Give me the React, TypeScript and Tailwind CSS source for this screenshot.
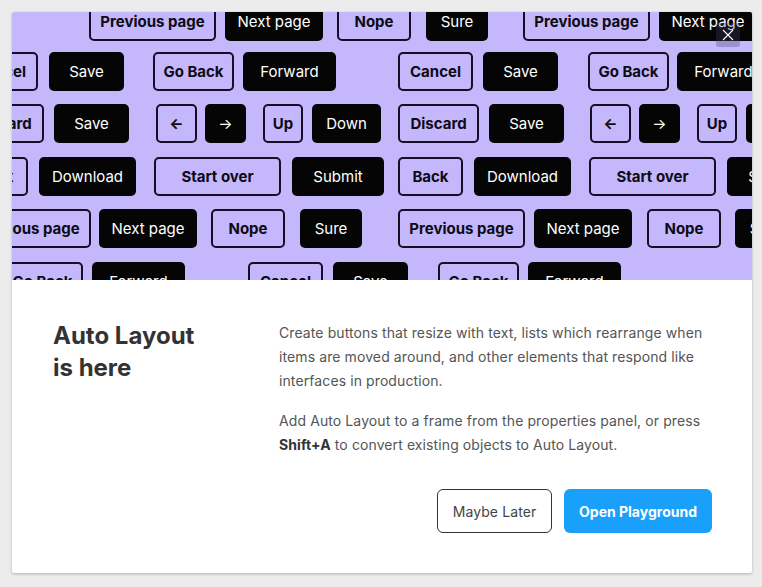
import React from "react";

type Btn = { t: string; d: boolean; w: string; ml: string };

const W: Record<string, string> = {
  "Previous page": "w-[127px]",
  "Next page": "w-[98px]",
  Nope: "w-[74px]",
  Sure: "w-[62px]",
  Cancel: "w-[75px]",
  Save: "w-[75px]",
  "Go Back": "w-[81px]",
  Forward: "w-[93px]",
  Discard: "w-[81px]",
  "←": "w-[41px]",
  "→": "w-[41px]",
  Up: "w-[40px]",
  Down: "w-[69px]",
  Back: "w-[65px]",
  Download: "w-[97px]",
  "Start over": "w-[127px]",
  Submit: "w-[92px]",
};

const b = (t: string, d: boolean, ml: string): Btn => ({ t, d, w: W[t], ml });

const rows: { mt: string; items: Btn[] }[] = [
  {
    mt: "-mt-[10px]",
    items: [
      b("Previous page", false, "ml-[77px]"),
      b("Next page", true, "ml-[9px]"),
      b("Nope", false, "ml-[14px]"),
      b("Sure", true, "ml-[15px]"),
      b("Previous page", false, "ml-[35px]"),
      b("Next page", true, "ml-[9px]"),
    ],
  },
  {
    mt: "mt-[11px]",
    items: [
      b("Cancel", false, "-ml-[49px]"),
      b("Save", true, "ml-[11px]"),
      b("Go Back", false, "ml-[29px]"),
      b("Forward", true, "ml-[9px]"),
      b("Cancel", false, "ml-[62px]"),
      b("Save", true, "ml-[10px]"),
      b("Go Back", false, "ml-[30px]"),
      b("Forward", true, "ml-[8px]"),
    ],
  },
  {
    mt: "mt-[13px]",
    items: [
      b("Discard", false, "-ml-[49px]"),
      b("Save", true, "ml-[10px]"),
      b("←", false, "ml-[27px]"),
      b("→", true, "ml-[8px]"),
      b("Up", false, "ml-[17px]"),
      b("Down", true, "ml-[9px]"),
      b("Discard", false, "ml-[17px]"),
      b("Save", true, "ml-[10px]"),
      b("←", false, "ml-[26px]"),
      b("→", true, "ml-[8px]"),
      b("Up", false, "ml-[17px]"),
      b("Down", true, "ml-[9px]"),
    ],
  },
  {
    mt: "mt-[14px]",
    items: [
      b("Back", false, "-ml-[49px]"),
      b("Download", true, "ml-[11px]"),
      b("Start over", false, "ml-[18px]"),
      b("Submit", true, "ml-[11px]"),
      b("Back", false, "ml-[14px]"),
      b("Download", true, "ml-[11px]"),
      b("Start over", false, "ml-[18px]"),
      b("Submit", true, "ml-[11px]"),
    ],
  },
  {
    mt: "mt-[13px]",
    items: [
      b("Previous page", false, "-ml-[48px]"),
      b("Next page", true, "ml-[8px]"),
      b("Nope", false, "ml-[14px]"),
      b("Sure", true, "ml-[15px]"),
      b("Previous page", false, "ml-[36px]"),
      b("Next page", true, "ml-[9px]"),
      b("Nope", false, "ml-[15px]"),
      b("Sure", true, "ml-[14px]"),
    ],
  },
  {
    mt: "mt-[14px]",
    items: [
      b("Go Back", false, "-ml-[10px]"),
      b("Forward", true, "ml-[9px]"),
      b("Cancel", false, "ml-[63px]"),
      b("Save", true, "ml-[10px]"),
      b("Go Back", false, "ml-[30px]"),
      b("Forward", true, "ml-[9px]"),
    ],
  },
];

function PatternButton({ btn }: { btn: Btn }) {
  const base =
    "shrink-0 h-[39px] rounded-[5px] flex items-center justify-center text-[15px] leading-none whitespace-nowrap";
  const style = btn.d
    ? "bg-[#050505] text-white font-normal"
    : "border-2 border-[#140f24] text-[#0d0b14] font-bold";
  return <div className={`${base} ${style} ${btn.w} ${btn.ml}`}>{btn.t}</div>;
}

export default function App() {
  return (
    <div
      className="w-full h-[587px] bg-[#ececec] pt-[12px] pl-[12px]"
      style={{ fontFamily: "Inter, 'Noto Sans', sans-serif" }}
    >
      <div className="w-[740px] h-[561px] bg-white rounded-[2px] shadow-[0_1px_3px_rgba(0,0,0,0.25)] overflow-hidden flex flex-col">
        <div className="relative h-[268px] bg-[#c5b7fc] overflow-hidden shrink-0">
          <div className="flex flex-col">
            {rows.map((r, i) => (
              <div key={i} className={`flex ${r.mt}`}>
                {r.items.map((btn, j) => (
                  <PatternButton key={j} btn={btn} />
                ))}
              </div>
            ))}
          </div>
          <div className="absolute top-[11px] right-[12px] w-[24px] h-[24px] rounded-[3px] bg-[rgba(70,60,110,0.3)] flex items-center justify-center">
            <svg width="12" height="12" viewBox="0 0 12 12" fill="none">
              <path d="M1 1L11 11M11 1L1 11" stroke="white" strokeWidth="1.1" />
            </svg>
          </div>
        </div>
        <div className="flex-1 flex pt-[40px] pl-[41px] pr-[40px]">
          <div className="w-[226px] shrink-0">
            <h1 className="text-[24px] leading-[32px] font-bold text-[#333333]">
              Auto Layout
              <br />
              is here
            </h1>
          </div>
          <div className="flex-1 flex flex-col">
            <p className="mt-[1px] text-[14px] leading-[24px] tracking-[0.1px] text-[#555555]">
              Create buttons that resize with text, lists which rearrange when
              items are moved around, and other elements that respond like
              interfaces in production.
            </p>
            <p className="mt-[16px] text-[14px] leading-[24px] tracking-[0.1px] text-[#555555]">
              Add Auto Layout to a frame from the properties panel, or press{" "}
              <span className="font-bold text-[#333333]">Shift+A</span> to
              convert existing objects to Auto Layout.
            </p>
            <div className="mt-[32px] flex justify-end gap-[12px]">
              <button className="w-[115px] h-[44px] rounded-[6px] border border-[#333333] text-[14px] tracking-[0.1px] text-[#444444]">
                Maybe Later
              </button>
              <button className="w-[148px] h-[44px] rounded-[6px] bg-[#18a0fb] text-[14px] font-bold text-white">
                Open Playground
              </button>
            </div>
          </div>
        </div>
      </div>
    </div>
  );
}
